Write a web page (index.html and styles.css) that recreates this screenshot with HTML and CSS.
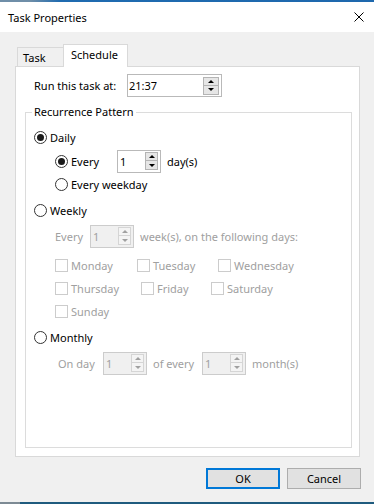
FILE: index.html
```html
<!DOCTYPE html>
<html>
<head>
<meta charset="utf-8">
<title>Task Properties</title>
<link rel="stylesheet" href="styles.css">
</head>
<body>
<div class="window">
  <div class="strip strip-top"></div>
  <div class="titlebar">
    <span class="title">Task Properties</span>
    <svg class="close" width="10" height="10" viewBox="0 0 10 10"><path d="M0.5 0.5 L9.5 9.5 M9.5 0.5 L0.5 9.5" stroke="#000" stroke-width="1" fill="none"/></svg>
  </div>
  <div class="client">
    <div class="tabs">
      <div class="tab">Task</div>
      <div class="tab tab-active">Schedule</div>
    </div>
    <div class="panel">
      <div class="run-row">
        <span class="run-label">Run this task at:</span>
        <div class="textbox time-box">
          <span class="val">21:37</span>
          <span class="spin spin-wide"><span class="spin-btn"><i class="arr up"></i></span><span class="spin-btn"><i class="arr down"></i></span></span>
        </div>
      </div>
      <fieldset class="group">
        <legend class="group-title">Recurrence Pattern</legend>

        <div class="row first">
          <span class="radio checked"></span><span class="lbl">Daily</span>
        </div>
        <div class="row sub mt2">
          <span class="opt w-every"><span class="radio checked"></span><span class="lbl">Every</span></span>
          <div class="textbox num"><span class="val">1</span><span class="spin"><span class="spin-btn"><i class="arr up"></i></span><span class="spin-btn"><i class="arr down"></i></span></span></div>
          <span class="after">day(s)</span>
        </div>
        <div class="row sub mt1">
          <span class="radio"></span><span class="lbl">Every weekday</span>
        </div>

        <div class="row mt4">
          <span class="radio"></span><span class="lbl">Weekly</span>
        </div>
        <div class="row sub mt4 disabled">
          <span class="w-every-w">Every</span>
          <div class="textbox num off"><span class="val">1</span><span class="spin"><span class="spin-btn"><i class="arr up"></i></span><span class="spin-btn"><i class="arr down"></i></span></span></div>
          <span class="after">week(s), on the following days:</span>
        </div>
        <div class="row sub mt7 disabled">
          <span class="day d82"><span class="check"></span><span class="lbl">Monday</span></span>
          <span class="day d81"><span class="check"></span><span class="lbl">Tuesday</span></span>
          <span class="day"><span class="check"></span><span class="lbl">Wednesday</span></span>
        </div>
        <div class="row sub mt1 disabled">
          <span class="day d86"><span class="check"></span><span class="lbl">Thursday</span></span>
          <span class="day d70"><span class="check"></span><span class="lbl">Friday</span></span>
          <span class="day"><span class="check"></span><span class="lbl">Saturday</span></span>
        </div>
        <div class="row sub mt1 disabled">
          <span class="day"><span class="check"></span><span class="lbl">Sunday</span></span>
        </div>

        <div class="row mt4">
          <span class="radio"></span><span class="lbl">Monthly</span>
        </div>
        <div class="row month mt4 disabled">
          <span class="w-onday">On day</span>
          <div class="textbox num off"><span class="val">1</span><span class="spin"><span class="spin-btn"><i class="arr up"></i></span><span class="spin-btn"><i class="arr down"></i></span></span></div>
          <span class="after w-ofevery">of every</span>
          <div class="textbox num off"><span class="val">1</span><span class="spin"><span class="spin-btn"><i class="arr up"></i></span><span class="spin-btn"><i class="arr down"></i></span></span></div>
          <span class="after">month(s)</span>
        </div>
      </fieldset>
    </div>
    <div class="buttons">
      <button class="btn btn-default">OK</button>
      <button class="btn">Cancel</button>
    </div>
  </div>
  <div class="strip strip-bottom"></div>
</div>
</body>
</html>
```

FILE: styles.css
```css
* { box-sizing: border-box; }
html, body { margin: 0; padding: 0; }
body {
  width: 374px;
  height: 504px;
  overflow: hidden;
  font-family: "Noto Sans", "Open Sans", sans-serif;
  font-size: 11px;
  line-height: 15px;
  color: #000;
  background: #f0f0f0;
}
.window {
  display: flex;
  flex-direction: column;
  height: 504px;
}
.strip { flex: none; height: 2px; }
.strip-top { background: linear-gradient(to right, #6f8ea8 0, #6f8ea8 30px, #1f6bb0 60px, #1e68ad 100%); }
.strip-bottom { background: linear-gradient(to right, #7d8a94 0, #7d8a94 20px, #1f5b7e 20px, #1f5b7e 100%); }

.titlebar {
  flex: none;
  height: 30px;
  background: #fff;
  display: flex;
  align-items: center;
  justify-content: space-between;
  padding: 0 10px 0 8px;
}
.title { font-size: 11px; }
.close { display: block; margin-top: 0; }

.client {
  flex: 1;
  padding: 12px 0 0 15px;
}

.tabs {
  display: flex;
  align-items: flex-end;
  height: 22px;
  padding-left: 2px;
}
.tab {
  height: 19px;
  width: 46px;
  border: 1px solid #d9d9d9;
  border-right: none;
  border-bottom: none;
  background: #f0f0f0;
  padding: 2px 0 0 5px;
}
.tab-active {
  position: relative;
  z-index: 1;
  height: 23px;
  width: 65px;
  margin-bottom: -1px;
  border-right: 1px solid #d9d9d9;
  background: #fff;
  padding: 2px 0 0 7px;
}

.panel {
  width: 345px;
  height: 391px;
  background: #fff;
  border: 1px solid #d9d9d9;
  padding: 7px 0 0 18px;
}

.run-row {
  display: flex;
  align-items: center;
  height: 23px;
}
.run-label { width: 93px; }

.textbox {
  display: flex;
  align-items: center;
  justify-content: space-between;
  height: 23px;
  border: 1px solid #b9b9b9;
  background: #fff;
  padding: 0 2px 0 2px;
}
.time-box { width: 95px; padding-left: 1px; }
.num { width: 44px; }
.textbox.off { border-color: #cccccc; background: #f0f0f0; }

.spin {
  display: flex;
  flex-direction: column;
  width: 13px;
}
.spin-wide { width: 16px; }
.spin-btn {
  height: 9px;
  background: #e6e6e6;
  border: 1px solid #b4b4b4;
  display: flex;
  align-items: center;
  justify-content: center;
}
.spin-btn + .spin-btn { border-top: none; height: 9px; }
.off .spin-btn { background: #f4f4f4; border-color: #d5d5d5; }
.arr {
  display: block;
  width: 0;
  height: 0;
  border-left: 3px solid transparent;
  border-right: 3px solid transparent;
}
.arr.up { border-bottom: 3px solid #000; }
.arr.down { border-top: 3px solid #000; }
.off .arr.up { border-bottom-color: #a0a0a0; }
.off .arr.down { border-top-color: #a0a0a0; }

.group {
  margin: 7px 0 0 -9px;
  width: 327px;
  height: 344px;
  border: 1px solid #dcdcdc;
  padding: 6px 0 0 8px;
  min-width: 0;
}
.group-title {
  padding: 0 2px;
  margin-left: -2px;
  line-height: 16px;
}

.row {
  display: flex;
  align-items: center;
  height: 22px;
}
.sub { padding-left: 21px; }
.month { padding-left: 24px; }
.mt1 { margin-top: 1px; }
.mt2 { margin-top: 2px; }
.mt4 { margin-top: 4px; }
.mt7 { margin-top: 7px; }

.disabled { color: #a0a0a0; }

.radio {
  flex: none;
  width: 13px;
  height: 13px;
  border: 1px solid #333;
  border-radius: 50%;
  background: #fff;
  display: flex;
  align-items: center;
  justify-content: center;
}
.radio.checked::after {
  content: "";
  width: 7px;
  height: 7px;
  border-radius: 50%;
  background: #1a1a1a;
}
.lbl { margin-left: 3px; }

.opt { display: flex; align-items: center; }
.w-every { width: 62px; }
.w-every-w { width: 35px; }
.w-onday { width: 45px; }
.after { margin-left: 6px; }
.after.w-ofevery { width: 49px; }

.day { display: flex; align-items: center; }
.d82 { width: 82px; }
.d81 { width: 81px; }
.d86 { width: 86px; }
.d70 { width: 70px; }
.check {
  flex: none;
  width: 13px;
  height: 13px;
  border: 1px solid #cccccc;
  background: #fff;
}

.buttons {
  display: flex;
  justify-content: flex-end;
  gap: 7px;
  margin-top: 11px;
  padding-right: 13px;
}
.btn {
  width: 74px;
  height: 21px;
  padding: 0;
  font-family: "Noto Sans", "Open Sans", sans-serif;
  font-size: 11px;
  color: #000;
  background: #e1e1e1;
  border: 1px solid #adadad;
}
.btn-default { border: 2px solid #0078d7; }
```
